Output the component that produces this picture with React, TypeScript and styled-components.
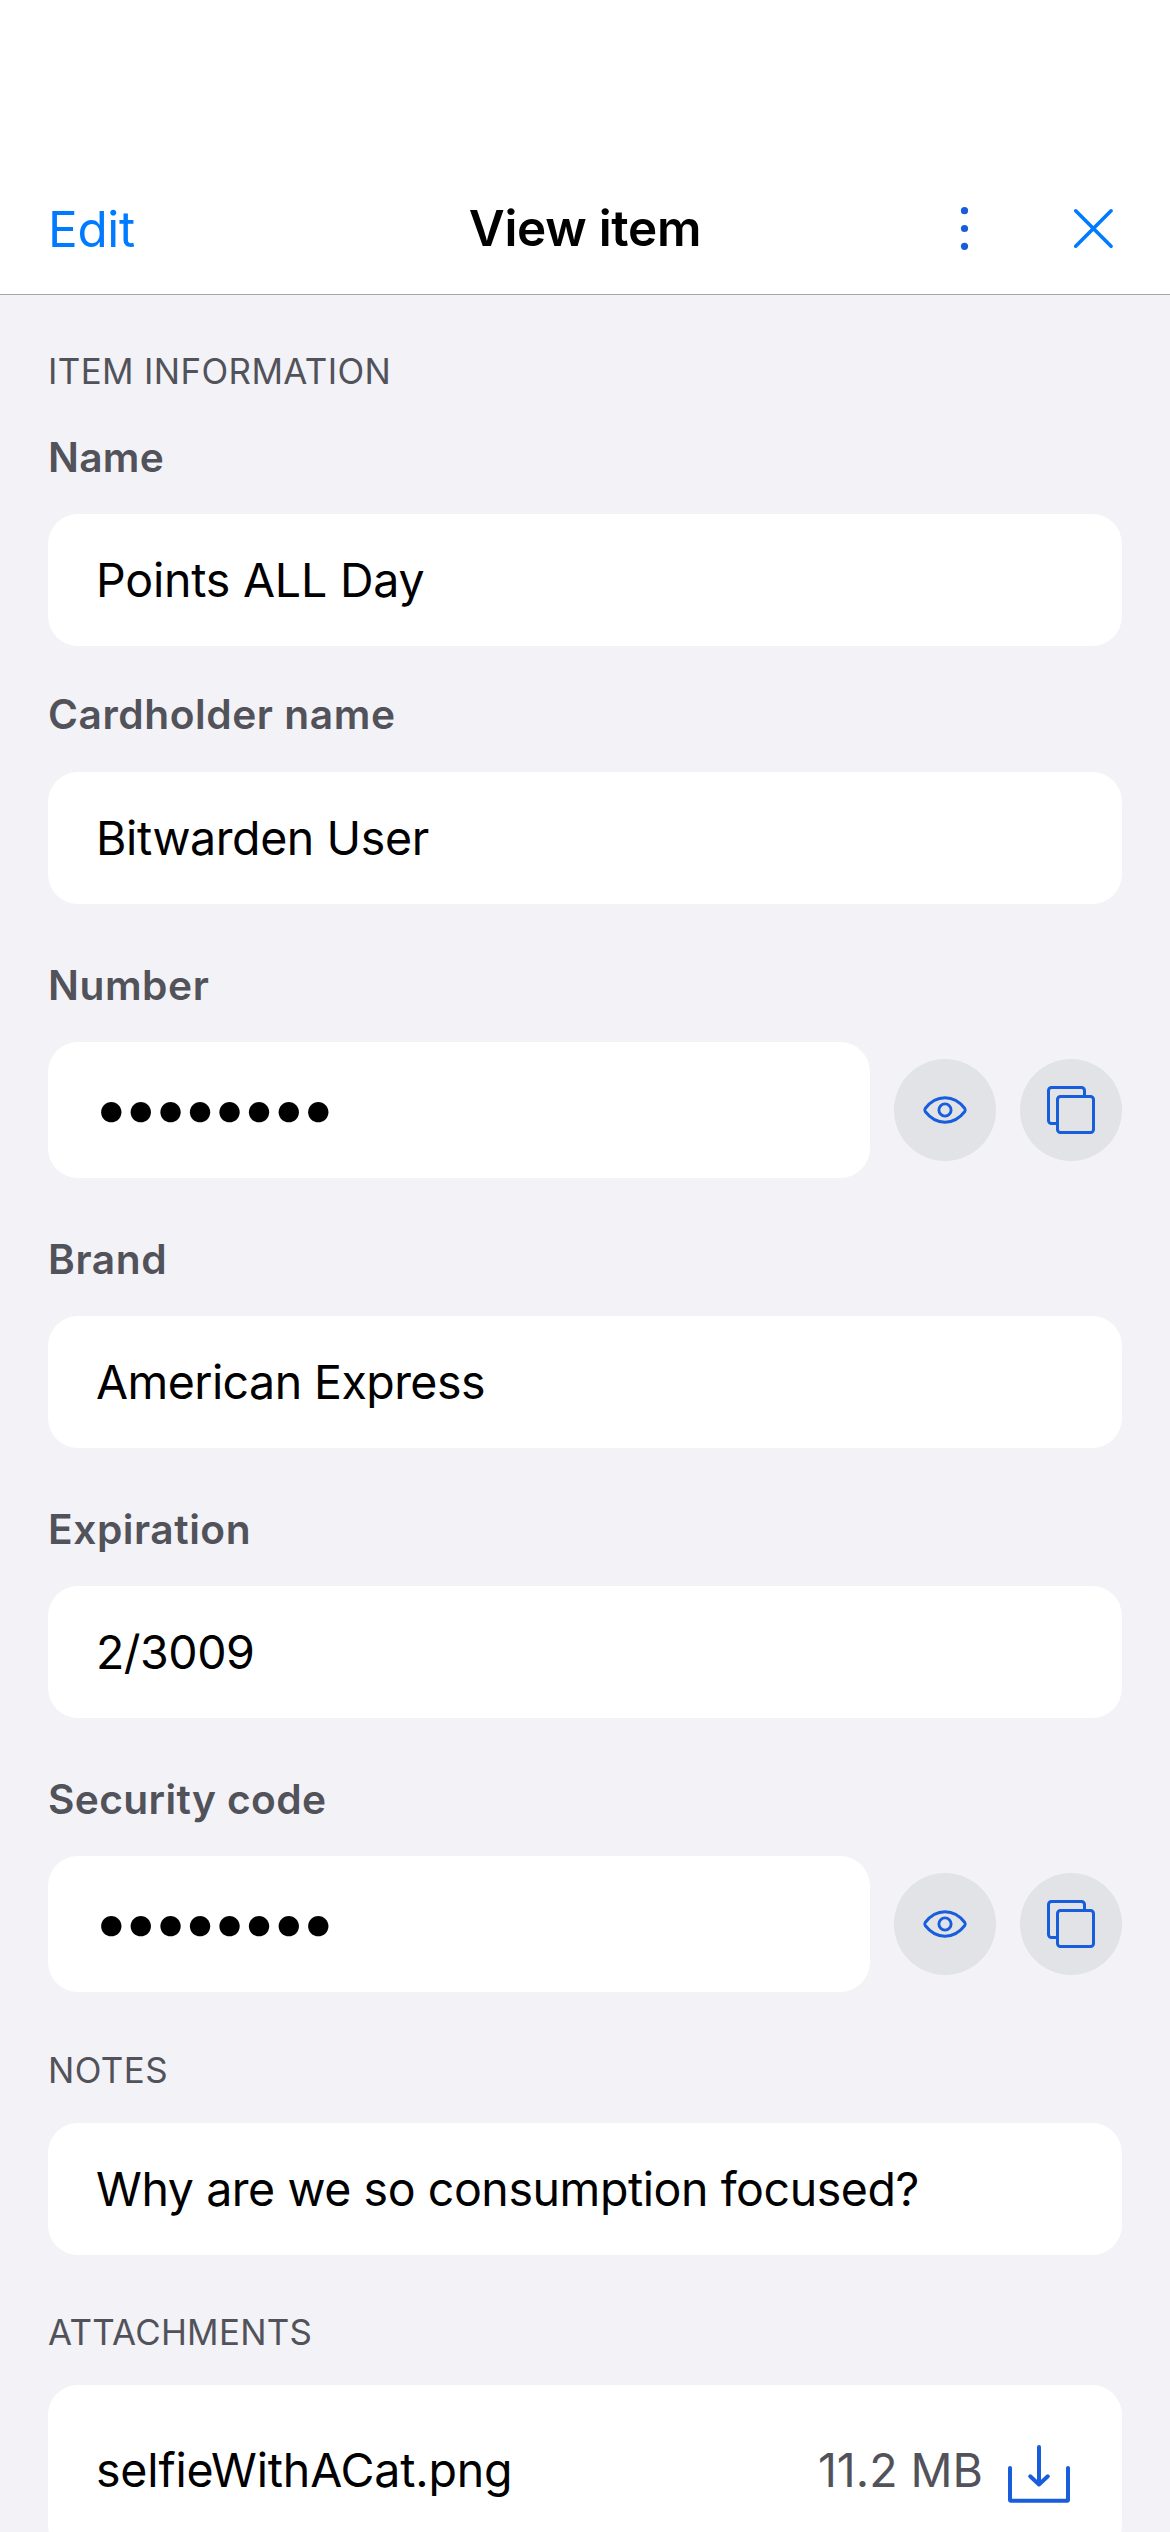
import React from 'react';
import styled, { createGlobalStyle } from 'styled-components';

const GlobalStyle = createGlobalStyle`
  *, *::before, *::after { box-sizing: border-box; }
  body {
    margin: 0;
    background: #f2f2f7;
    font-family: Inter, Roboto, "Liberation Sans", sans-serif;
  }
  button {
    margin: 0;
    padding: 0;
    border: 0;
    background: none;
    font: inherit;
    color: inherit;
  }
`;

const Screen = styled.div`
  display: flex;
  flex-direction: column;
  width: 1170px;
  height: 2532px;
  overflow: hidden;
  background: #f2f2f7;
`;

const NavBar = styled.header`
  display: grid;
  grid-template-columns: 1fr auto 1fr;
  align-items: center;
  flex: none;
  height: 295px;
  padding: 162px 48px 0;
  background: #ffffff;
  border-bottom: 1px solid #a6a6aa;
`;

const EditButton = styled.button`
  justify-self: start;
  padding-top: 2px;
  font-size: 49.4px;
  line-height: 60px;
  letter-spacing: -0.3px;
  color: #007aff;
`;

const NavTitle = styled.h1`
  margin: 0;
  font-size: 49.4px;
  font-weight: 600;
  line-height: 60px;
  letter-spacing: -0.26px;
  white-space: nowrap;
  color: #000000;
`;

const NavActions = styled.div`
  display: flex;
  justify-content: flex-end;
  gap: 81px;
  padding-right: 5px;
`;

const NavIconButton = styled.button`
  display: flex;
  width: 48px;
  height: 48px;
`;

const Content = styled.main`
  display: flex;
  flex-direction: column;
  flex: none;
  padding: 55px 48px 0;
`;

const SectionTitle = styled.h2<{ $before?: number; $after?: number; $tracking: number }>`
  margin: ${(p) => p.$before ?? 0}px 0 ${(p) => p.$after ?? 32}px;
  font-size: 34.9px;
  font-weight: 400;
  line-height: 42px;
  letter-spacing: ${(p) => p.$tracking}px;
  text-transform: uppercase;
  color: #52525a;
`;

const FieldGroup = styled.section<{ $before?: number; $gap?: number }>`
  display: flex;
  flex-direction: column;
  gap: ${(p) => p.$gap ?? 32}px;
  margin-top: ${(p) => p.$before ?? 57}px;
`;

const FieldLabel = styled.div<{ $tracking: number }>`
  font-size: 40.7px;
  font-weight: 600;
  line-height: 49px;
  letter-spacing: ${(p) => p.$tracking}px;
  color: #52525a;
`;

const FieldRow = styled.div`
  display: flex;
  align-items: center;
  gap: 24px;
`;

const Card = styled.div<{ $height?: number }>`
  display: flex;
  align-items: center;
  flex: 1;
  height: ${(p) => p.$height ?? 132}px;
  padding: 0 50px 0 48px;
  border-radius: 30px;
  background: #ffffff;
`;

const CardText = styled.span<{ $tracking: number; $muted?: boolean }>`
  font-size: 46.5px;
  line-height: 56px;
  letter-spacing: ${(p) => p.$tracking}px;
  white-space: nowrap;
  color: ${(p) => (p.$muted ? '#52525a' : '#000000')};
`;

const MaskedText = styled.span`
  margin-left: -3px;
  padding-bottom: 5px;
  font-size: 65px;
  line-height: 79px;
  letter-spacing: -7px;
  color: #000000;
`;

const RoundButton = styled.button`
  display: flex;
  flex: none;
  width: 102px;
  height: 102px;
  border-radius: 50%;
  background: #e2e3e7;
`;

const AttachmentCard = styled(Card)`
  flex: none;
  gap: 23px;
`;

const FileName = styled(CardText)`
  flex: 1;
`;

const BLUE = '#175ddc';

const DotsIcon = () => (
  <svg width="48" height="48" viewBox="0 0 48 48" fill={BLUE}>
    <circle cx="24.5" cy="6.7" r="3.6" />
    <circle cx="24.5" cy="24.5" r="3.6" />
    <circle cx="24.5" cy="42.3" r="3.6" />
  </svg>
);

const CloseIcon = () => (
  <svg width="48" height="48" viewBox="0 0 48 48" fill="none" stroke="#007aff" strokeWidth="3.6" strokeLinecap="round">
    <path d="M6.7 6.8 42.1 42.2M42.1 6.8 6.7 42.2" />
  </svg>
);

const EyeIcon = () => (
  <svg width="102" height="102" viewBox="0 0 102 102" fill="none" stroke={BLUE} strokeWidth="2.9">
    <path d="M31.2 49.5C36.2 43 43 38.8 51 38.8S65.8 43 70.8 49.5Q71.7 51 70.8 52.5C65.8 59 59 63.2 51 63.2S36.2 59 31.2 52.5Q30.3 51 31.2 49.5Z" />
    <circle cx="51" cy="51" r="6.1" />
  </svg>
);

const CopyIcon = () => (
  <svg width="102" height="102" viewBox="0 0 102 102" fill="none" stroke={BLUE} strokeWidth="3">
    <rect x="37.5" y="37.5" width="36" height="36" rx="3" />
    <path d="M37.5 64.5H31.5a3 3 0 0 1-3-3V31.5a3 3 0 0 1 3-3H61.5a3 3 0 0 1 3 3V37.5" />
  </svg>
);

const DownloadIcon = () => (
  <svg width="66" height="66" viewBox="0 0 66 66" fill="none" stroke={BLUE} strokeWidth="4" strokeLinecap="round" strokeLinejoin="round">
    <path d="M4 31V62.7a1 1 0 0 0 1 1H61a1 1 0 0 0 1-1V31" />
    <path d="M33 10V47.5M24.2 39.3 33 47.5 41.8 39.3" />
  </svg>
);

interface FieldProps {
  label: string;
  labelTracking: number;
  value?: string;
  valueTracking?: number;
  before?: number;
  gap?: number;
}

const Field = ({ label, labelTracking, value, valueTracking = 0, before, gap }: FieldProps) => (
  <FieldGroup $before={before} $gap={gap}>
    <FieldLabel $tracking={labelTracking}>{label}</FieldLabel>
    {value ? (
      <FieldRow>
        <Card>
          <CardText $tracking={valueTracking}>{value}</CardText>
        </Card>
      </FieldRow>
    ) : (
      <FieldRow>
        <Card $height={136}>
          <MaskedText>••••••••</MaskedText>
        </Card>
        <RoundButton aria-label="Show">
          <EyeIcon />
        </RoundButton>
        <RoundButton aria-label="Copy">
          <CopyIcon />
        </RoundButton>
      </FieldRow>
    )}
  </FieldGroup>
);

export default function App() {
  return (
    <>
      <GlobalStyle />
      <Screen>
        <NavBar>
          <EditButton>Edit</EditButton>
          <NavTitle>View item</NavTitle>
          <NavActions>
            <NavIconButton aria-label="More">
              <DotsIcon />
            </NavIconButton>
            <NavIconButton aria-label="Close">
              <CloseIcon />
            </NavIconButton>
          </NavActions>
        </NavBar>
        <Content>
          <SectionTitle $after={0} $tracking={0.38}>Item information</SectionTitle>
          <Field before={41} label="Name" labelTracking={0.3} value="Points ALL Day" valueTracking={-0.21} />
          <Field before={44} gap={33} label="Cardholder name" labelTracking={0.56} value="Bitwarden User" valueTracking={-0.4} />
          <Field label="Number" labelTracking={0.55} />
          <Field label="Brand" labelTracking={0.6} value="American Express" valueTracking={-0.56} />
          <Field label="Expiration" labelTracking={0.55} value="2/3009" valueTracking={-0.5} />
          <Field label="Security code" labelTracking={0.36} />
          <SectionTitle $before={57} $tracking={0.47}>Notes</SectionTitle>
          <FieldRow>
            <Card>
              <CardText $tracking={-0.43}>Why are we so consumption focused?</CardText>
            </Card>
          </FieldRow>
          <SectionTitle $before={56} $tracking={0.27}>Attachments</SectionTitle>
          <AttachmentCard $height={170}>
            <FileName $tracking={-0.18}>selfieWithACat.png</FileName>
            <CardText $tracking={0} $muted>11.2 MB</CardText>
            <DownloadIcon />
          </AttachmentCard>
        </Content>
      </Screen>
    </>
  );
}
